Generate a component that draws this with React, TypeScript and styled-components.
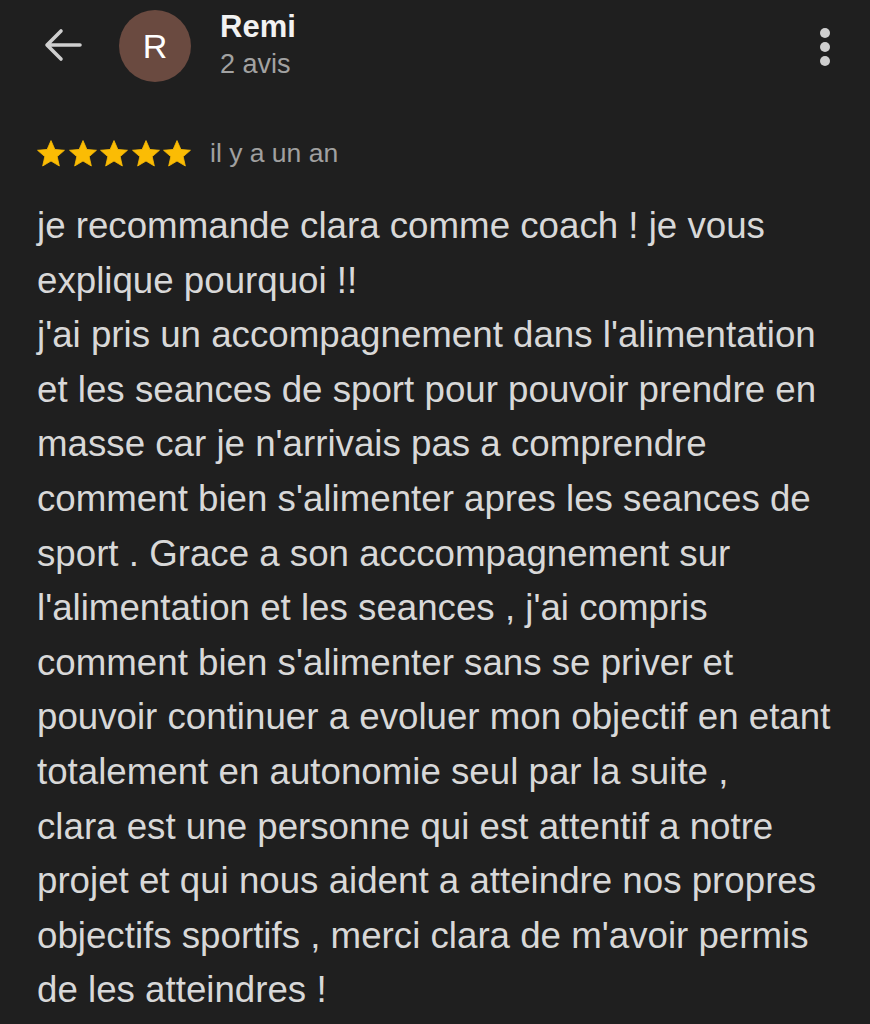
import React from "react";
import styled, { createGlobalStyle } from "styled-components";

const Global = createGlobalStyle`
  html, body { margin: 0; padding: 0; background: #1f1f1f; }
  body { font-family: "Liberation Sans", Arial, sans-serif; }
`;

const Page = styled.div`
  width: 870px;
  height: 1024px;
  background: #1f1f1f;
  overflow: hidden;
  box-sizing: border-box;
`;

const Header = styled.div`
  display: flex;
  align-items: center;
  height: 92px;
  padding: 0 0 0 43px;
`;

const BackButton = styled.div`
  width: 40px;
  height: 40px;
  display: flex;
  align-items: center;
  justify-content: center;
  margin-right: 36px;
  margin-top: -2px;
`;

const Avatar = styled.div`
  width: 72px;
  height: 72px;
  border-radius: 50%;
  background: #6a4a40;
  color: #ffffff;
  display: flex;
  align-items: center;
  justify-content: center;
  font-size: 34px;
  margin-right: 29px;
`;

const NameBlock = styled.div`
  display: flex;
  flex-direction: column;
  flex: 1;
`;

const Name = styled.div`
  color: #f2f2f2;
  font-weight: bold;
  font-size: 31px;
  line-height: 36px;
`;

const Sub = styled.div`
  color: #a2a2a2;
  font-size: 27px;
  line-height: 38px;
`;

const Menu = styled.div`
  display: flex;
  flex-direction: column;
  gap: 4px;
  margin-right: 40px;
  margin-top: 2px;
`;

const Dot = styled.span`
  width: 10px;
  height: 10px;
  border-radius: 50%;
  background: #cfcfcf;
`;

const RatingRow = styled.div`
  display: flex;
  align-items: center;
  padding: 0 0 0 37px;
  margin-top: 41px;
  height: 40px;
`;

const Stars = styled.div`
  display: flex;
  gap: 3.5px;
  margin-right: 19px;
`;

const When = styled.span`
  color: #a0a0a0;
  font-size: 26.5px;
`;

const Body = styled.div`
  padding: 0 0 0 37px;
  margin-top: 26px;
  color: #d8d8d8;
  font-size: 36.7px;
  line-height: 54.6px;
`;

const Line = styled.div`
  white-space: nowrap;
`;

const Star = () => (
  <svg width="28" height="27" viewBox="1.6 1.8 20.8 20">
    <path
      d="M12 2.2l2.9 6.6 7.1.6-5.4 4.7 1.6 7-6.2-3.7-6.2 3.7 1.6-7L2 9.4l7.1-.6z"
      fill="#fbbc04"
      stroke="#fbbc04"
      strokeWidth="0.6"
      strokeLinejoin="round"
    />
  </svg>
);

const lines = [
  "je recommande clara comme coach ! je vous",
  "explique pourquoi !!",
  "j'ai pris un accompagnement dans l'alimentation",
  "et les seances de sport pour pouvoir prendre en",
  "masse car je n'arrivais pas a comprendre",
  "comment bien s'alimenter apres les seances de",
  "sport . Grace a son acccompagnement sur",
  "l'alimentation et les seances , j'ai compris",
  "comment bien s'alimenter sans se priver et",
  "pouvoir continuer a evoluer mon objectif en etant",
  "totalement en autonomie seul par la suite ,",
  "clara est une personne qui est attentif a notre",
  "projet et qui nous aident a atteindre nos propres",
  "objectifs sportifs , merci clara de m'avoir permis",
  "de les atteindres !",
];

export default function App() {
  return (
    <Page>
      <Global />
      <Header>
        <BackButton>
          <svg width="38" height="34" viewBox="0 0 38 34">
            <path
              d="M36 17H4M17 3L3 17l14 14"
              fill="none"
              stroke="#cfcfcf"
              strokeWidth="3.6"
              strokeLinecap="round"
              strokeLinejoin="round"
            />
          </svg>
        </BackButton>
        <Avatar>R</Avatar>
        <NameBlock>
          <Name>Remi</Name>
          <Sub>2 avis</Sub>
        </NameBlock>
        <Menu>
          <Dot />
          <Dot />
          <Dot />
        </Menu>
      </Header>
      <RatingRow>
        <Stars>
          {[0, 1, 2, 3, 4].map((i) => (
            <Star key={i} />
          ))}
        </Stars>
        <When>il y a un an</When>
      </RatingRow>
      <Body>
        {lines.map((l, i) => (
          <Line key={i}>{l}</Line>
        ))}
      </Body>
    </Page>
  );
}
